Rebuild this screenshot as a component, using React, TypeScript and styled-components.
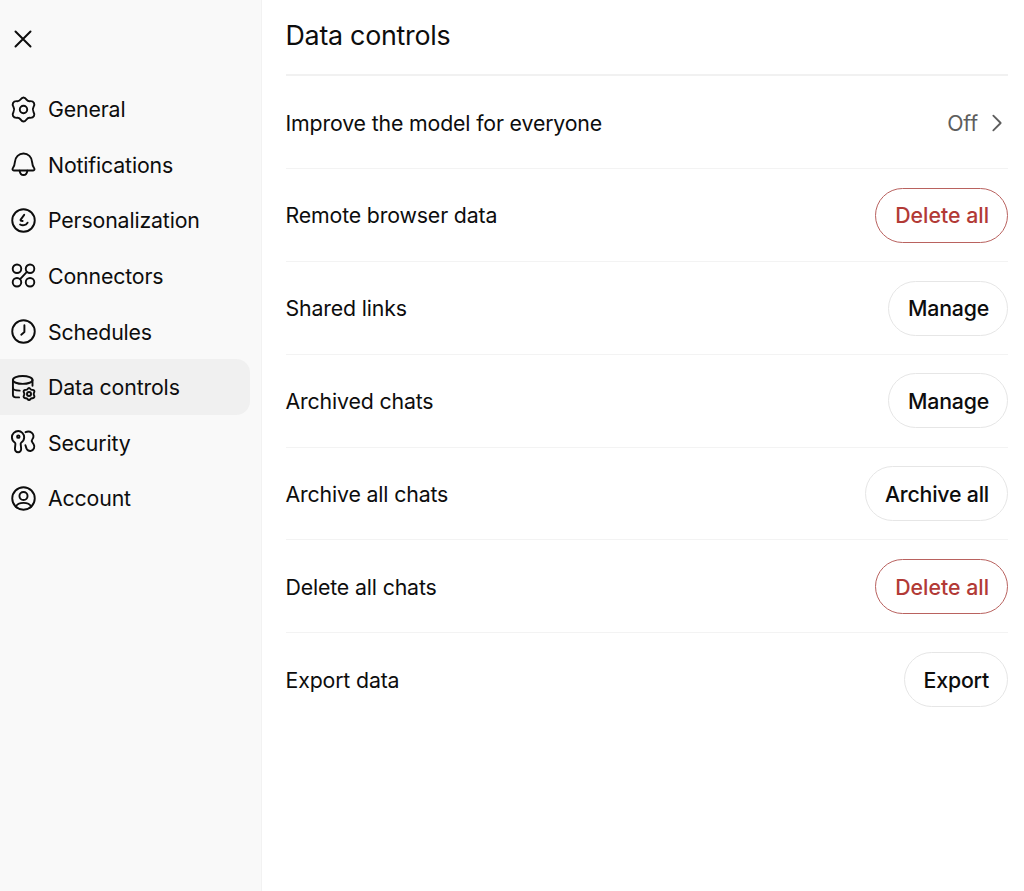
import React from 'react';
import styled, { createGlobalStyle } from 'styled-components';

const GlobalStyle = createGlobalStyle`
  html, body {
    margin: 0;
    height: 100%;
    background: #fff;
  }
  body {
    font-family: Inter, "Liberation Sans", sans-serif;
    color: #0d0d0d;
    overflow: hidden;
  }
`;

const Page = styled.div`
  display: flex;
  width: 1024px;
  height: 891px;
`;

const Sidebar = styled.aside`
  box-sizing: border-box;
  flex: none;
  width: 262px;
  padding: 0 11px 0 0;
  background: #f9f9f9;
  border-right: 1px solid #f2f2f2;
`;

const CloseButton = styled.button`
  display: flex;
  align-items: center;
  border: 0;
  padding: 0;
  margin: 26px 0 29.4px 11px;
  width: 26px;
  height: 26px;
  background: none;
  color: #0d0d0d;
`;

const NavList = styled.nav`
  display: flex;
  flex-direction: column;
`;

const NavItem = styled.div<{ $active?: boolean }>`
  display: flex;
  align-items: center;
  gap: 11px;
  height: 55.6px;
  padding-left: 10px;
  font-size: 21.3px;
  letter-spacing: -0.15px;
  color: #0d0d0d;
  background: ${(p) => (p.$active ? '#f0f0f0' : 'transparent')};
  border-radius: ${(p) => (p.$active ? '0 14px 14px 0' : '0')};
`;

const NavIcon = styled.svg`
  flex: none;
  width: 27px;
  height: 27px;
  fill: none;
  stroke: #0d0d0d;
  stroke-width: 1.7;
  stroke-linecap: round;
  stroke-linejoin: round;
`;

const Main = styled.main`
  flex: 1;
  box-sizing: border-box;
  padding: 0 16px 0 23.5px;
`;

const Header = styled.header`
  display: flex;
  align-items: center;
  box-sizing: border-box;
  height: 76.4px;
  padding-bottom: 4px;
  border-bottom: 2px solid #f1f1f1;
`;

const Title = styled.h1`
  margin: 0;
  font-size: 26.8px;
  font-weight: 400;
  letter-spacing: -0.25px;
`;

const Row = styled.div`
  display: flex;
  align-items: center;
  justify-content: space-between;
  box-sizing: border-box;
  height: 92.8px;
  padding-top: 0.5px;
  font-size: 21.3px;
  letter-spacing: -0.15px;
  border-bottom: 1px solid #f3f3f3;

  &:last-child {
    border-bottom: 0;
  }
`;

const Value = styled.div`
  display: flex;
  align-items: center;
  gap: 8px;
  color: #5d5d5d;
`;

const Chevron = styled.svg`
  width: 22px;
  height: 22px;
  fill: none;
  stroke: #5d5d5d;
  stroke-width: 2;
  stroke-linecap: round;
  stroke-linejoin: round;
`;

const PillButton = styled.button<{ $danger?: boolean }>`
  box-sizing: border-box;
  height: 55px;
  padding: 0 18px 0 19px;
  border-radius: 28px;
  background: #fff;
  font-family: inherit;
  font-size: 21.3px;
  font-weight: 500;
  letter-spacing: ${(p) => (p.$danger ? '0' : '-0.2px')};
  color: ${(p) => (p.$danger ? '#b23a36' : '#0d0d0d')};
  border: 1px solid ${(p) => (p.$danger ? '#b9625f' : '#e6e6e6')};
`;

const gearPath =
  'M12 1.300C13.200 1.300 14.100 2.300 14.900 3.400C15.600 4.400 16.500 4.700 17.800 4.600C19.300 4.500 20.600 4.900 21.300 6.200C22 7.500 21.600 8.700 20.900 9.800C20.100 11.100 20.100 12.900 20.900 14.200C21.600 15.300 22 16.500 21.300 17.800C20.600 19.100 19.300 19.500 17.800 19.400C16.500 19.300 15.600 19.600 14.900 20.600C14.100 21.700 13.200 22.700 12 22.700C10.800 22.700 9.900 21.700 9.100 20.600C8.400 19.600 7.500 19.300 6.200 19.400C4.700 19.500 3.400 19.100 2.700 17.800C2 16.500 2.400 15.300 3.100 14.200C3.900 12.900 3.900 11.100 3.100 9.800C2.400 8.700 2 7.500 2.700 6.200C3.400 4.900 4.700 4.500 6.200 4.600C7.500 4.700 8.400 4.400 9.100 3.400C9.900 2.300 10.800 1.300 12 1.300Z';

const navItems: { label: string; icon: React.ReactNode; active?: boolean }[] = [
  {
    label: 'General',
    icon: (
      <>
        <path d={gearPath} />
        <circle cx="12" cy="12" r="3.300" />
      </>
    ),
  },
  {
    label: 'Notifications',
    icon: (
      <>
        <path d="M12 2.200c-4.200 0-7.300 3.200-7.600 7.400-.2 2.400-.7 4.100-1.900 5.700-.6.900-.2 2.100.9 2.100h17.200c1.100 0 1.500-1.200.9-2.100-1.200-1.600-1.700-3.300-1.900-5.700-.3-4.200-3.400-7.400-7.600-7.400Z" />
        <path d="M8.600 17.600c.3 2.200 1.700 3.700 3.400 3.700s3.100-1.500 3.400-3.700" />
      </>
    ),
  },
  {
    label: 'Personalization',
    icon: (
      <>
        <circle cx="12" cy="12" r="10" />
        <path d="M12.600 7 9.500 11.200c-.3.500-.1 1 .5 1.100l1.200.2" />
        <path d="M9 15.500c2 1.300 5 1 6.600-1.600" />
      </>
    ),
  },
  {
    label: 'Connectors',
    icon: (
      <>
        <circle cx="6.200" cy="6" r="3.800" />
        <circle cx="17.800" cy="6" r="3.800" />
        <circle cx="6.200" cy="18" r="3.800" />
        <circle cx="17.800" cy="18" r="3.800" />
        <path d="M15 8.800 9 15.200" />
      </>
    ),
  },
  {
    label: 'Schedules',
    icon: (
      <>
        <circle cx="12" cy="12" r="10" />
        <path d="M12.800 6.500V12.500L10 14.800" />
      </>
    ),
  },
  {
    label: 'Data controls',
    active: true,
    icon: (
      <>
        <ellipse cx="11.300" cy="5.300" rx="8.700" ry="3.500" />
        <path d="M2.600 5.300V18.500c0 1.300.9 2.200 2.500 2.300h3" />
        <path d="M2.600 12.500c0 1.300 2.500 2.200 6 2.300" />
        <path d="M20 5.300V10.500" />
        <g transform="translate(16.900 17.800) scale(.5) translate(-12 -12)" strokeWidth="3.400">
          <path d={gearPath} />
          <circle cx="12" cy="12" r="3.600" />
        </g>
      </>
    ),
  },
  {
    label: 'Security',
    icon: (
      <>
        <path d="M7.400 1.800c-3.200 0-5.700 2.500-5.700 5.500 0 2 1.100 3.700 2.500 4.700.5.400.7.900.6 1.500l-.4 3.600c-.2 2 1 3.600 2.800 3.600 1.800 0 2.900-1.500 2.700-3.500l-.4-3.700c-.1-.6.100-1.100.6-1.500 1.400-1 2.500-2.700 2.500-4.700 0-3-2.600-5.500-5.200-5.500Z" />
        <circle cx="7.400" cy="6.800" r="1.100" />
        <path d="M13.800 2.800c1.700-.7 4-.6 5.500.5 1.900 1.500 2 4 .7 5.600-.9 1.100-1 1.900-.2 2.900l1.200 1.700c1.500 2.400.2 5.800-2.700 6-1.700.1-3-.8-3.600-2.100l-1-3" />
      </>
    ),
  },
  {
    label: 'Account',
    icon: (
      <>
        <circle cx="12" cy="12" r="10" />
        <circle cx="12" cy="9.800" r="3.600" />
        <path d="M5.200 19.300c1-2.200 3.700-3.400 6.800-3.400s5.800 1.200 6.800 3.400" />
      </>
    ),
  },
];

const rows: { label: string; action: string; danger?: boolean }[] = [
  { label: 'Remote browser data', action: 'Delete all', danger: true },
  { label: 'Shared links', action: 'Manage' },
  { label: 'Archived chats', action: 'Manage' },
  { label: 'Archive all chats', action: 'Archive all' },
  { label: 'Delete all chats', action: 'Delete all', danger: true },
  { label: 'Export data', action: 'Export' },
];

const App = () => {
  return (
    <Page>
      <GlobalStyle />
      <Sidebar>
        <CloseButton aria-label="Close">
          <svg width="24" height="24" viewBox="0 0 24 24" fill="none" stroke="#0d0d0d" strokeWidth="2" strokeLinecap="round">
            <path d="M4.500 4.500 19.500 19.500M19.500 4.500 4.500 19.500" />
          </svg>
        </CloseButton>
        <NavList>
          {navItems.map((item) => (
            <NavItem key={item.label} $active={item.active}>
              <NavIcon viewBox="0 0 24 24">{item.icon}</NavIcon>
              {item.label}
            </NavItem>
          ))}
        </NavList>
      </Sidebar>
      <Main>
        <Header>
          <Title>Data controls</Title>
        </Header>
        <Row>
          Improve the model for everyone
          <Value>
            Off
            <Chevron viewBox="0 0 24 24">
              <path d="M8 4 16 12 8 20" />
            </Chevron>
          </Value>
        </Row>
        {rows.map((row) => (
          <Row key={row.label}>
            {row.label}
            <PillButton $danger={row.danger}>{row.action}</PillButton>
          </Row>
        ))}
      </Main>
    </Page>
  );
};

export default App;
